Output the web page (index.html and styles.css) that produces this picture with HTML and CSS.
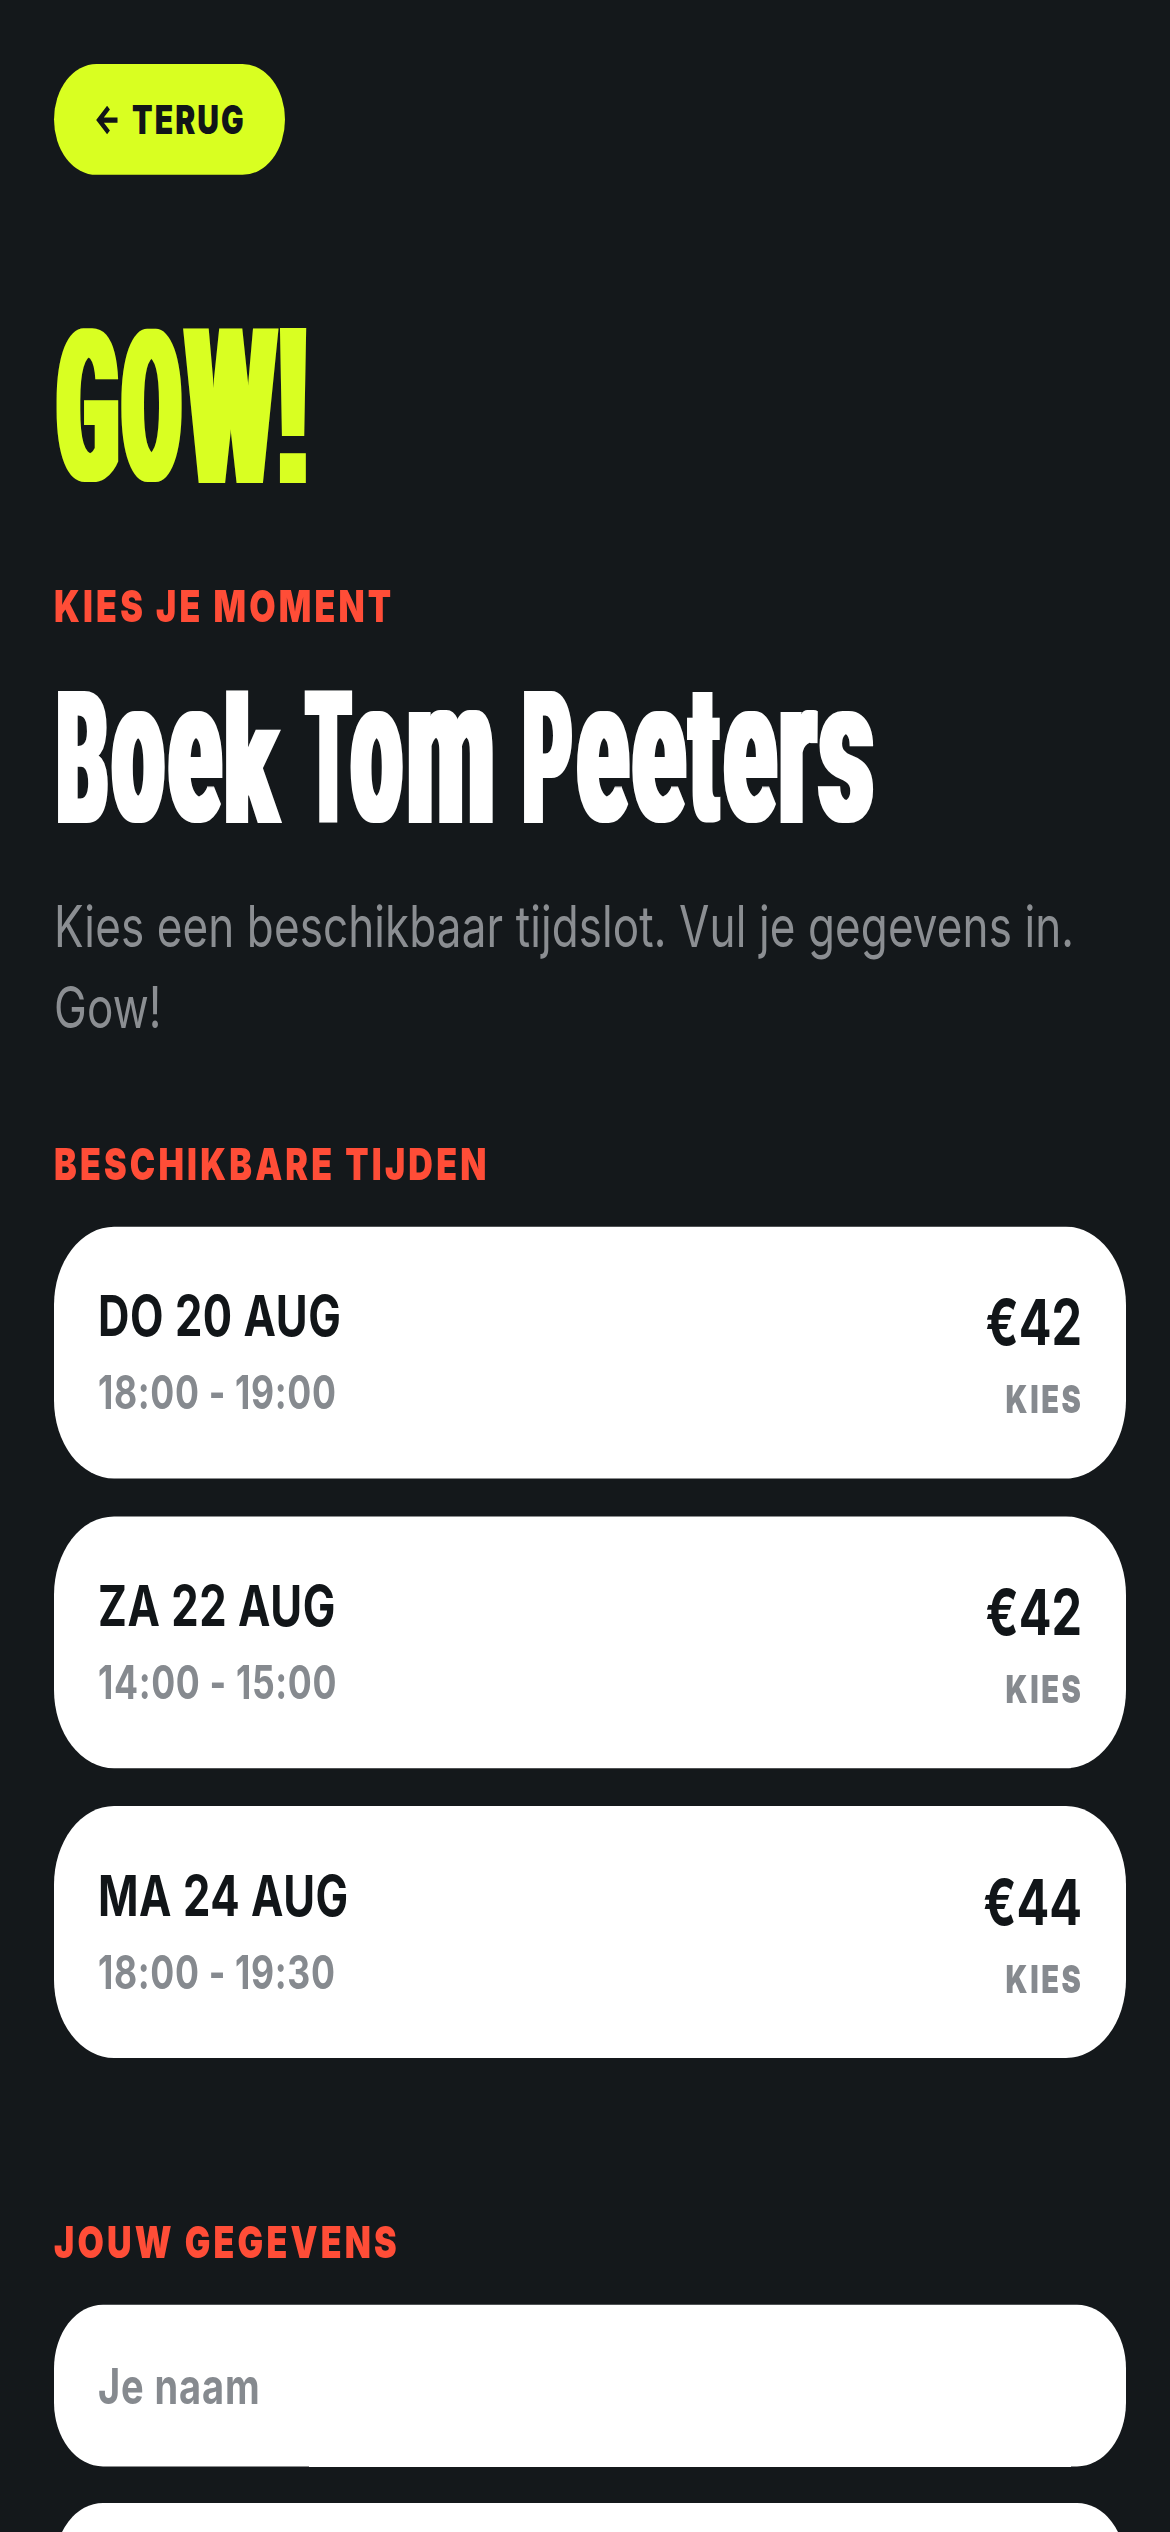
FILE: index.html
```html
<!DOCTYPE html>
<html lang="nl">
<head>
<meta charset="utf-8">
<title>Boek Tom Peeters</title>
<link rel="stylesheet" href="styles.css">
</head>
<body>
<main class="page">
  <a class="back">
    <svg class="back-arrow" viewBox="0 0 22 22"><path d="M12.5 1.5 3 11l9.500 9.500M3 11h18.500" fill="none" stroke="currentColor" stroke-width="4"/></svg>
    <span>TERUG</span>
  </a>

  <svg class="brand" viewBox="54 320 400 172" preserveAspectRatio="none" role="img" aria-label="GOW!">
    <filter id="widen-brand" x="-10%" width="120%"><feMorphology operator="dilate" radius="4 0"/></filter>
    <g filter="url(#widen-brand)">
      <text transform="translate(57 480.600) scale(.9 2.1)">G</text>
      <text transform="translate(122.600 480.600) scale(.84 2.1)">O</text>
      <text transform="translate(186 483) scale(1.035 2.166)">W</text>
      <text class="bang" transform="translate(272 483) scale(1.27 2.24)">!</text>
    </g>
  </svg>

  <p class="label label-intro">KIES JE MOMENT</p>
  <h1 class="title">
    <svg class="title-art" viewBox="54 680 900 155" preserveAspectRatio="none" role="img" aria-label="Boek Tom Peeters">
      <filter id="widen-title" x="-10%" width="120%"><feMorphology operator="dilate" radius="3 0"/></filter>
      <g filter="url(#widen-title)">
        <text transform="translate(56.800 823) scale(.793 1.857)">B</text>
        <text transform="translate(112.200 821) scale(.923 2.05)">o</text>
        <text transform="translate(168.600 821) scale(.97 2.05)">e</text>
        <text transform="translate(224.600 823) scale(.97 1.76)">k</text>
        <text transform="translate(306.600 823) scale(.695 1.857)">T</text>
        <text transform="translate(351.300 821) scale(.904 2.05)">o</text>
        <text transform="translate(407.100 823) scale(1.015 2.09)">m</text>
        <text transform="translate(523 823) scale(.75 1.857)">P</text>
        <text transform="translate(577.200 821) scale(.94 2.05)">e</text>
        <text transform="translate(632.600 821) scale(.97 2.05)">e</text>
        <text transform="translate(689.600 821) scale(.836 1.95)">t</text>
        <text transform="translate(724.100 821) scale(.96 2.05)">e</text>
        <text transform="translate(779.100 823) scale(.97 2.09)">r</text>
        <text transform="translate(819 821) scale(1.06 2.05)">s</text>
      </g>
    </svg>
  </h1>
  <p class="intro">Kies een beschikbaar tijdslot. Vul je gegevens in. Gow!</p>

  <h2 class="label label-slots">BESCHIKBARE TIJDEN</h2>
  <section class="slots">
    <article class="slot">
      <div class="when"><div class="date">DO 20 AUG</div><div class="time">18:00 - 19:00</div></div>
      <div class="offer"><div class="price">€42</div><div class="pick">KIES</div></div>
    </article>
    <article class="slot">
      <div class="when"><div class="date">ZA 22 AUG</div><div class="time">14:00 - 15:00</div></div>
      <div class="offer"><div class="price">€42</div><div class="pick">KIES</div></div>
    </article>
    <article class="slot">
      <div class="when"><div class="date">MA 24 AUG</div><div class="time">18:00 - 19:30</div></div>
      <div class="offer"><div class="price">€44</div><div class="pick">KIES</div></div>
    </article>
  </section>

  <h2 class="label label-form">JOUW GEGEVENS</h2>
  <form class="form">
    <input class="field" type="text" placeholder="Je naam">
    <input class="field" type="text">
  </form>
</main>
</body>
</html>
```
FILE: styles.css
```css
* { box-sizing: border-box; }

html, body { margin: 0; height: 2532px; overflow: hidden; background: #14181b; }

/* The whole page is drawn taller than wide, type and corners included. */
.page {
  width: 1170px;
  height: 1941px;
  padding: 49.3px 44px 0 54px;
  overflow: hidden;
  transform: scaleY(1.305);
  transform-origin: 0 0;
  font-family: Inter, "Liberation Sans", sans-serif;
  color: #111518;
}

.back {
  display: flex;
  align-items: center;
  width: 231px;
  height: 85px;
  padding-left: 42px;
  gap: 14px;
  border-radius: 43px;
  background: #d9ff21;
  font-size: 30px;
  font-weight: 900;
  letter-spacing: 2.1px;
}
.back-arrow { width: 22px; height: 22px; }

.brand, .title-art {
  display: block;
  overflow: visible;
  font-family: Roboto, "Liberation Sans", sans-serif;
  font-size: 100px;
  font-weight: 900;
}
.bang { font-family: "Liberation Sans", sans-serif; }
.brand { width: 400px; height: 131.8px; margin-top: 110.9px; fill: #d9ff21; }
.title { margin: 35.6px 0 0; }
.title-art { width: 900px; height: 118.8px; fill: #fff; }

.label {
  margin: 0;
  line-height: 40px;
  font-size: 34px;
  font-weight: 900;
  letter-spacing: 3.2px;
  color: #ff4d37;
}
.label-intro { margin-top: 68.5px; }
.label-slots { margin-top: 69.5px; }
.label-form { margin-top: 120.9px; }

.intro {
  margin: 39.1px 0 0;
  font-size: 44px;
  line-height: 62px;
  letter-spacing: .11px;
  color: #8b8e92;
}

.slots { display: flex; flex-direction: column; gap: 28.4px; margin-top: 27.3px; }
.slot {
  display: flex;
  justify-content: space-between;
  height: 193.5px;
  padding: 40.6px 44px 0;
  border-radius: 60px;
  background: #fff;
}
.date { font-size: 43.5px; line-height: 56px; font-weight: 700; letter-spacing: .55px; }
.time { margin-top: 9.1px; font-size: 35.6px; line-height: 46px; font-weight: 700; letter-spacing: .65px; color: #868a8f; }
.offer { padding-top: 2px; text-align: right; }
.price { font-size: 48.5px; line-height: 64px; font-weight: 700; }
.pick { margin-top: 7.8px; font-size: 29px; line-height: 38px; font-weight: 900; letter-spacing: 2.6px; margin-right: -1.5px; color: #868a8f; }

.form { display: flex; flex-direction: column; gap: 27.8px; margin-top: 27.7px; }
.field {
  height: 124.4px;
  flex: none;
  padding: 0 44px;
  border: 0;
  border-radius: 49px;
  background: #fff;
  font: 700 38px Inter, "Liberation Sans", sans-serif;
  letter-spacing: .9px;
}
.field::placeholder { color: #868a8f; opacity: 1; }
```
